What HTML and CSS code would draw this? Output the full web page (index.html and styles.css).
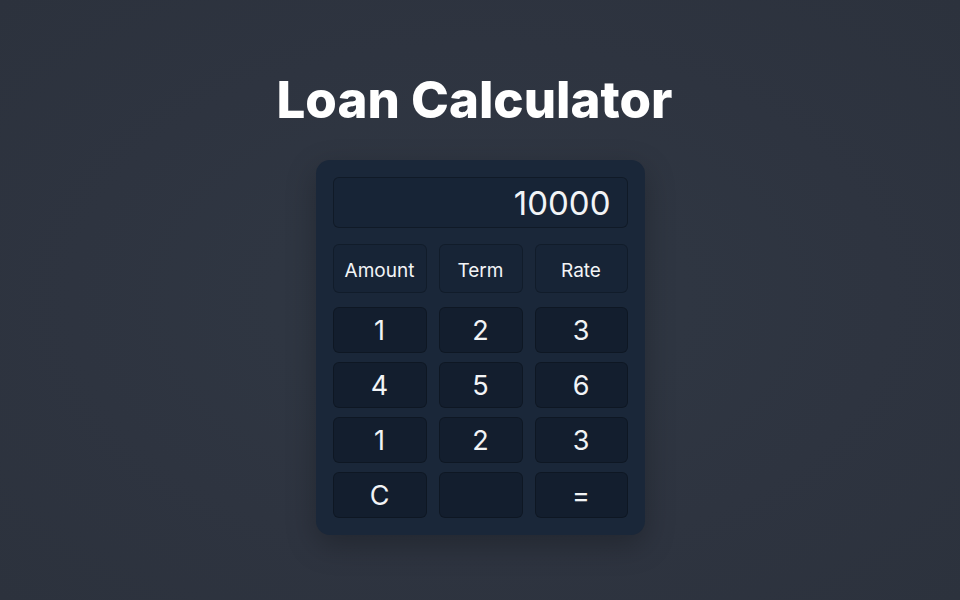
FILE: index.html
```html
<!DOCTYPE html>
<html>
<head>
<meta charset="utf-8">
<link rel="stylesheet" href="styles.css">
</head>
<body>
<main class="page">
  <h1 class="title">Loan Calculator</h1>
  <section class="calc">
    <div class="display">10000</div>
    <div class="modes">
      <button class="key mode">Amount</button>
      <button class="key mode">Term</button>
      <button class="key mode">Rate</button>
    </div>
    <div class="pad">
      <button class="key num">1</button>
      <button class="key num">2</button>
      <button class="key num">3</button>
      <button class="key num">4</button>
      <button class="key num">5</button>
      <button class="key num">6</button>
      <button class="key num">1</button>
      <button class="key num">2</button>
      <button class="key num">3</button>
      <button class="key num">C</button>
      <button class="key num"></button>
      <button class="key num">=</button>
    </div>
  </section>
</main>
</body>
</html>
```
FILE: styles.css
```css
html, body {
  margin: 0;
  height: 100%;
}
body {
  background: radial-gradient(ellipse at 50% 50%, #303844 0%, #2e3440 60%, #2c323d 100%);
  font-family: Inter, "Noto Sans", sans-serif;
  color: #f4f6f8;
}
.page {
  display: flex;
  flex-direction: column;
  align-items: center;
}
.title {
  margin: 68px 11px 0 0;
  font-size: 51px;
  font-weight: 800;
  letter-spacing: 0;
  line-height: 64px;
  color: #ffffff;
}
.calc {
  margin-top: 28px;
  width: 295px;
  padding: 17px;
  background: #1a2739;
  border-radius: 14px;
  box-shadow: 0 10px 30px rgba(0, 0, 0, 0.25);
}
.display {
  box-sizing: border-box;
  height: 51px;
  border: 1px solid rgba(0, 0, 0, 0.28);
  border-radius: 6px;
  background: #172436;
  text-align: right;
  padding: 0 16px 0 13px;
  font-size: 33px;
  font-weight: 400;
  line-height: 50px;
  color: #f2f4f6;
}
.modes, .pad {
  display: grid;
  grid-template-columns: 94px 84px 93px;
  column-gap: 12px;
}
.modes {
  margin-top: 16px;
}
.pad {
  margin-top: 14px;
  grid-auto-rows: 46px;
  row-gap: 9px;
}
.key {
  box-sizing: border-box;
  border: 1px solid rgba(0, 0, 0, 0.22);
  border-radius: 6px;
  background: #162233;
  color: #f2f4f6;
  font-family: Inter, "Noto Sans", sans-serif;
  padding: 0;
}
.mode {
  height: 49px;
  padding-top: 3px;
  font-size: 19px;
  background: #172436;
}
.num {
  font-size: 27px;
  background: #131e2e;
}
```
